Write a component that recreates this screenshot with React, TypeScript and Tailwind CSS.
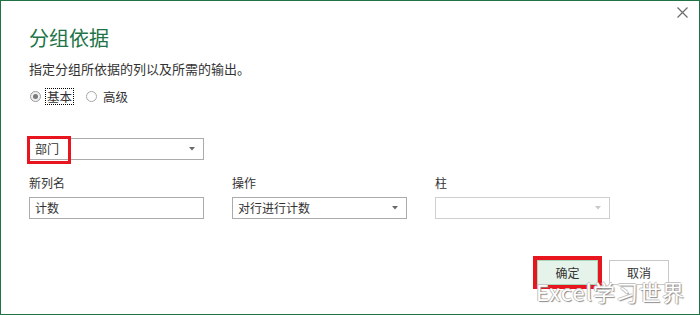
import React, { useState } from 'react'

const Arrow = ({ disabled }: { disabled?: boolean }) => (
  <svg width="6" height="4" viewBox="0 0 6 4" className="shrink-0">
    <path d="M0 0h6L3 3.5z" fill={disabled ? '#c8c8c8' : '#6a6a6a'} />
  </svg>
)

const Select = ({ value, disabled, children }: { value?: string; disabled?: boolean; children?: React.ReactNode }) => (
  <div
    className={`relative flex items-center justify-between w-[175px] h-[22px] pl-[5px] pr-[8px] border bg-white text-[12px] text-[#333] ${
      disabled ? 'border-[#cfcfcf]' : 'border-[#ababab]'
    }`}
  >
    <span className="leading-[16px]">{value}</span>
    <Arrow disabled={disabled} />
    {children}
  </div>
)

const Radio = ({ checked, label, focused }: { checked?: boolean; label: string; focused?: boolean }) => (
  <label className="flex items-center gap-[4px]">
    <span
      className={`flex items-center justify-center w-[11px] h-[11px] rounded-full border ${
        checked ? 'border-[#9a9a9a] bg-[#f0f0f0]' : 'border-[#a8a8a8] bg-white'
      }`}
    >
      {checked && <span className="w-[5px] h-[5px] rounded-full bg-[#7a7a7a]" />}
    </span>
    <span
      className={`px-[1px] text-[12.5px] leading-[15px] text-[#333] border border-dotted ${
        focused ? 'border-black' : 'border-transparent'
      }`}
    >
      {label}
    </span>
  </label>
)

const App = () => {
  const [mode, setmode] = useState<string>('basic')
  return (
    <div
      className="relative w-[700px] h-[315px] border border-[#217346] bg-white overflow-hidden"
      style={{ fontFamily: '"Noto Sans CJK SC", "Liberation Sans", sans-serif' }}
    >
      <button className="absolute right-[10px] top-[5px] p-[1px]" aria-label="close">
        <svg width="11" height="11" viewBox="0 0 11 11">
          <path d="M0.5 0.5l10 10M10.5 0.5l-10 10" stroke="#6b6b6b" strokeWidth="1.2" />
        </svg>
      </button>

      <div className="flex flex-col pl-[28px] pt-[23px] pr-[30px]">
        <h1 className="text-[20px] leading-[28px] text-[#217346] font-normal">分组依据</h1>
        <p className="mt-[8px] text-[13px] leading-[18px] text-[#333]">指定分组所依据的列以及所需的输出。</p>

        <div className="mt-[10px] flex items-center gap-[12px] pl-[1px]" onClick={() => setmode(mode)}>
          <Radio checked={mode === 'basic'} focused label="基本" />
          <Radio checked={mode === 'adv'} label="高级" />
        </div>

        <div className="mt-[33px]">
          <Select value="部门">
            <div className="absolute left-[-3px] top-[-3px] w-[44px] h-[28px] border-[3px] border-[#e8141e]" />
          </Select>
        </div>

        <div className="mt-[15px] grid grid-cols-[175px_175px_175px] gap-x-[28px] gap-y-[6px] text-[12px] text-[#333]">
          <span className="leading-[16px]">新列名</span>
          <span className="leading-[16px]">操作</span>
          <span className="leading-[16px]">柱</span>
          <div className="flex items-center h-[22px] pl-[5px] border border-[#ababab] bg-white">
            <span className="leading-[16px]">计数</span>
          </div>
          <Select value="对行进行计数" />
          <Select disabled />
        </div>

        <div className="mt-[41px] flex justify-end gap-[11px] pr-[0px] text-[12px] text-[#333]">
          <div className="relative">
            <button className="w-[61px] h-[25px] border border-[#a8d8ba] bg-[#e6f3ea] leading-[16px]">确定</button>
            <div className="absolute left-[-4px] top-[-4px] w-[69px] h-[33px] border-[4px] border-[#e8141e]" />
          </div>
          <button className="w-[60px] h-[25px] border border-[#c8c8c8] bg-white leading-[16px]">取消</button>
        </div>
      </div>

      <div className="absolute left-[535px] top-[278px] text-[22px] leading-[24px] tracking-[1px] text-white [text-shadow:1px_1px_1px_#8a8a8a,-1px_0_0_#c4c4c4,0_-1px_0_#c4c4c4]">
        Excel学习世界
      </div>
    </div>
  )
}

export default App
